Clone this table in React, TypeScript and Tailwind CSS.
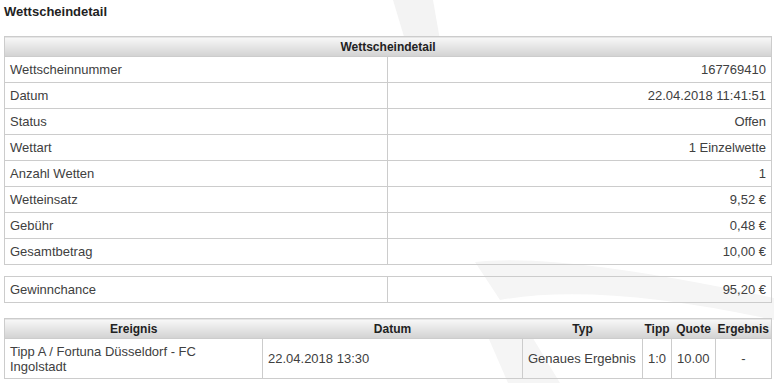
import React from 'react';

const details: [string, string][] = [
  ['Wettscheinnummer', '167769410'],
  ['Datum', '22.04.2018 11:41:51'],
  ['Status', 'Offen'],
  ['Wettart', '1 Einzelwette'],
  ['Anzahl Wetten', '1'],
  ['Wetteinsatz', '9,52 €'],
  ['Gebühr', '0,48 €'],
  ['Gesamtbetrag', '10,00 €'],
];

const th = 'h-[20px] p-0 font-bold text-[12px] text-[#222] text-center bg-gradient-to-b from-[#f8f8f8] to-[#d2d2d2]';
const td = 'border border-[#cccccc] h-[26px] py-0 px-[5px] align-middle';

function Watermark() {
  return (
    <svg className="absolute left-0 top-0 pointer-events-none" width="774" height="383" viewBox="0 0 774 383">
      <path d="M393 0 L433 0 L440 40 L405 40 Z" fill="#f3f3f3" />
      <path d="M475 262 Q560 252 774 298 L774 320 Q600 282 500 300 Z" fill="#f5f5f5" />
      <path d="M485 330 L528 330 L560 383 L508 383 Z" fill="#f5f5f5" />
    </svg>
  );
}

export default function App() {
  return (
    <div className="relative w-[774px] h-[383px] bg-white overflow-hidden font-['Liberation_Sans',Arial,sans-serif] text-[13px] text-[#404040]">
      <Watermark />
      <div className="relative px-[4px] pt-[4px]">
        <h2 className="text-[13px] font-bold text-[#222] leading-[15px]">Wettscheindetail</h2>

        <table className="mt-[17px] w-[768px] border-collapse table-fixed">
          <colgroup>
            <col className="w-[383px]" />
            <col />
          </colgroup>
          <thead>
            <tr>
              <th colSpan={2} className={`${th} border border-[#cccccc]`}>Wettscheindetail</th>
            </tr>
          </thead>
          <tbody>
            {details.map(([label, value]) => (
              <tr key={label}>
                <td className={td}>{label}</td>
                <td className={`${td} text-right`}>{value}</td>
              </tr>
            ))}
          </tbody>
        </table>

        <table className="mt-[11px] w-[768px] border-collapse table-fixed">
          <colgroup>
            <col className="w-[383px]" />
            <col />
          </colgroup>
          <tbody>
            <tr>
              <td className={td}>Gewinnchance</td>
              <td className={`${td} text-right`}>95,20 €</td>
            </tr>
          </tbody>
        </table>

        <table className="mt-[15px] w-[768px] border-collapse table-fixed">
          <colgroup>
            <col className="w-[258px]" />
            <col className="w-[260px]" />
            <col className="w-[120px]" />
            <col className="w-[29px]" />
            <col className="w-[44px]" />
            <col />
          </colgroup>
          <thead>
            <tr className="border border-[#cccccc]">
              <th className={th}>Ereignis</th>
              <th className={th}>Datum</th>
              <th className={th}>Typ</th>
              <th className={th}>Tipp</th>
              <th className={th}>Quote</th>
              <th className={th}>Ergebnis</th>
            </tr>
          </thead>
          <tbody>
            <tr>
              <td className={`${td} h-[40px] pr-[10px] leading-[15px]`}>Tipp A / Fortuna Düsseldorf - FC Ingolstadt</td>
              <td className={`${td} h-[40px]`}>22.04.2018 13:30</td>
              <td className={`${td} h-[40px]`}>Genaues Ergebnis</td>
              <td className={`${td} h-[40px] px-[3px]`}>1:0</td>
              <td className={`${td} h-[40px]`}>10.00</td>
              <td className={`${td} h-[40px] text-center`}>-</td>
            </tr>
          </tbody>
        </table>
      </div>
    </div>
  );
}
